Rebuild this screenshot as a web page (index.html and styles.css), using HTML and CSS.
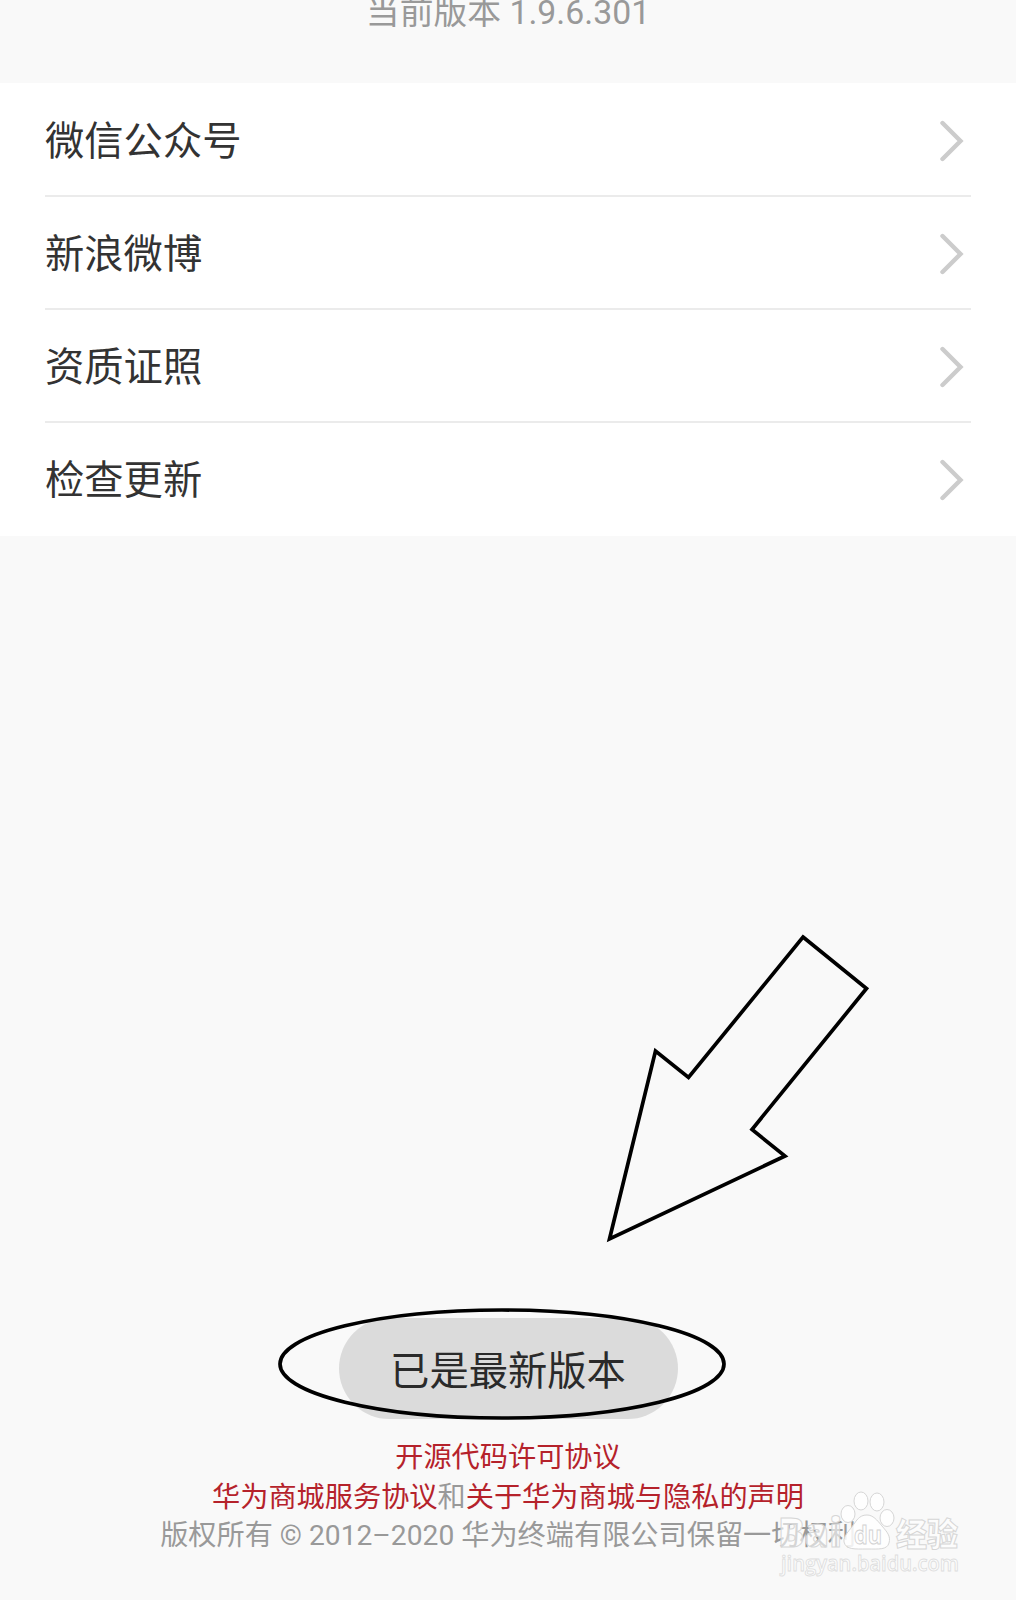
FILE: index.html
```html
<!DOCTYPE html>
<html lang="zh-CN">
<head>
    <meta charset="UTF-8">
    <meta name="viewport" content="width=device-width, initial-scale=1.0">
    <title>关于</title>
    <link rel="stylesheet" href="styles.css">
</head>
<body>

    <header class="version">当前版本 1.9.6.301</header>

    <ul class="menu">
        <li class="menu-item">
            <span>微信公众号</span>
            <svg class="chevron" width="24" height="42" viewBox="0 0 24 42"><path d="M2.5 3 L20.5 21 L2.5 39"/></svg>
        </li>
        <li class="menu-item">
            <span>新浪微博</span>
            <svg class="chevron" width="24" height="42" viewBox="0 0 24 42"><path d="M2.5 3 L20.5 21 L2.5 39"/></svg>
        </li>
        <li class="menu-item">
            <span>资质证照</span>
            <svg class="chevron" width="24" height="42" viewBox="0 0 24 42"><path d="M2.5 3 L20.5 21 L2.5 39"/></svg>
        </li>
        <li class="menu-item">
            <span>检查更新</span>
            <svg class="chevron" width="24" height="42" viewBox="0 0 24 42"><path d="M2.5 3 L20.5 21 L2.5 39"/></svg>
        </li>
    </ul>

    <div class="toast">已是最新版本</div>

    <footer class="footer">
        <p><a>开源代码许可协议</a></p>
        <p class="agreements"><a>华为商城服务协议</a>和<a>关于华为商城与隐私的声明</a></p>
        <p class="copyright">版权所有 © 2012–2020 华为终端有限公司保留一切权利</p>
    </footer>

    <!-- arrow and circle around the toast -->
    <svg class="marks" width="1016" height="1600" viewBox="0 0 1016 1600">
        <path d="M803 937 L866.5 988.5 L752 1129.5 L785 1156 L609.5 1239 L655.5 1051 L688.5 1077.5 Z"/>
        <ellipse cx="502" cy="1364" rx="222" ry="54"/>
    </svg>

    <svg class="watermark" width="200" height="100" viewBox="0 0 200 100">
        <text class="brand" x="8" y="67" textLength="64" lengthAdjust="spacingAndGlyphs">Bai</text>
        <g class="paw">
            <ellipse cx="78" cy="34" rx="7" ry="8.5"/>
            <ellipse cx="91" cy="21" rx="7" ry="9"/>
            <ellipse cx="107" cy="22" rx="7" ry="9"/>
            <ellipse cx="117" cy="38" rx="7" ry="8.5"/>
            <path d="M97 35 C103 35 107 40 112 46 C117 52 121 56 119 63 C117 70 109 69 97 69 C85 69 76 70 74 62 C73 56 80 50 84 44 C88 38 91 35 97 35 Z"/>
        </g>
        <text class="du" x="84" y="64" textLength="28" lengthAdjust="spacingAndGlyphs">du</text>
        <text class="brand cn" x="126" y="66" textLength="62" lengthAdjust="spacingAndGlyphs">经验</text>
        <text class="site" x="11" y="91" textLength="178" lengthAdjust="spacingAndGlyphs">jingyan.baidu.com</text>
    </svg>

</body>
</html>
```
FILE: styles.css
```css
* {
    box-sizing: border-box;
}

body {
    position: relative;
    display: flex;
    flex-direction: column;
    align-items: center;
    height: 1600px;
    margin: 0;
    overflow: hidden;
    font-family: Roboto, "Noto Sans CJK SC", sans-serif;
    background-color: #f9f9f9;
    color: #333;
}

.version {
    height: 83px;
    line-height: 26px;
    font-size: 33.8px;
    color: #999;
    white-space: nowrap;
}

.menu {
    width: 100%;
    height: 453px;
    margin: 0;
    padding: 0 45px;
    list-style: none;
    background-color: #fff;
}

.menu-item {
    display: flex;
    justify-content: space-between;
    align-items: center;
    height: 113px;
    padding-top: 2px;
    padding-right: 7px;
    border-bottom: 2px solid #ebebeb;
    font-size: 39.3px;
    line-height: 56px;
}

.menu-item span {
    padding-top: 2px;
}

.menu-item:first-child {
    height: 114px;
    padding-top: 3px;
}

.menu-item:last-child {
    padding-top: 0;
    border-bottom: none;
}

.chevron {
    fill: none;
    stroke: #ccc;
    stroke-width: 4.4;
    stroke-linecap: round;
}

.toast {
    width: 339px;
    height: 101px;
    margin-top: 782px;
    border-radius: 51px;
    background-color: #dbdbdb;
    color: #2a2a2a;
    font-size: 39.3px;
    line-height: 108px;
    text-align: center;
}

.footer {
    margin-top: 19px;
    font-size: 28.2px;
    line-height: 40px;
    color: #999;
    text-align: center;
    white-space: nowrap;
}

.footer p {
    margin: 0;
}

.footer a {
    color: #b5222b;
}

.footer .copyright {
    line-height: 36px;
}

.marks {
    position: absolute;
    top: 0;
    left: 0;
    fill: none;
    stroke: #000;
    stroke-width: 3.7;
}

.watermark {
    position: absolute;
    left: 770px;
    top: 1480px;
    fill: #fff;
    fill-opacity: 0.6;
    stroke: #d6d6d6;
    stroke-width: 1;
    font-family: "Open Sans", "Noto Sans CJK SC", sans-serif;
}

.paw {
    fill-opacity: 0.85;
}

.brand {
    font-size: 41px;
    font-weight: 800;
}

.brand.cn {
    font-size: 32px;
    font-weight: 900;
}

.du {
    font-size: 25px;
    font-weight: bold;
    stroke: #d2d2d2;
}

.site {
    font-size: 21px;
    font-weight: 600;
    stroke: #dedede;
    stroke-width: 0.9;
}
```
